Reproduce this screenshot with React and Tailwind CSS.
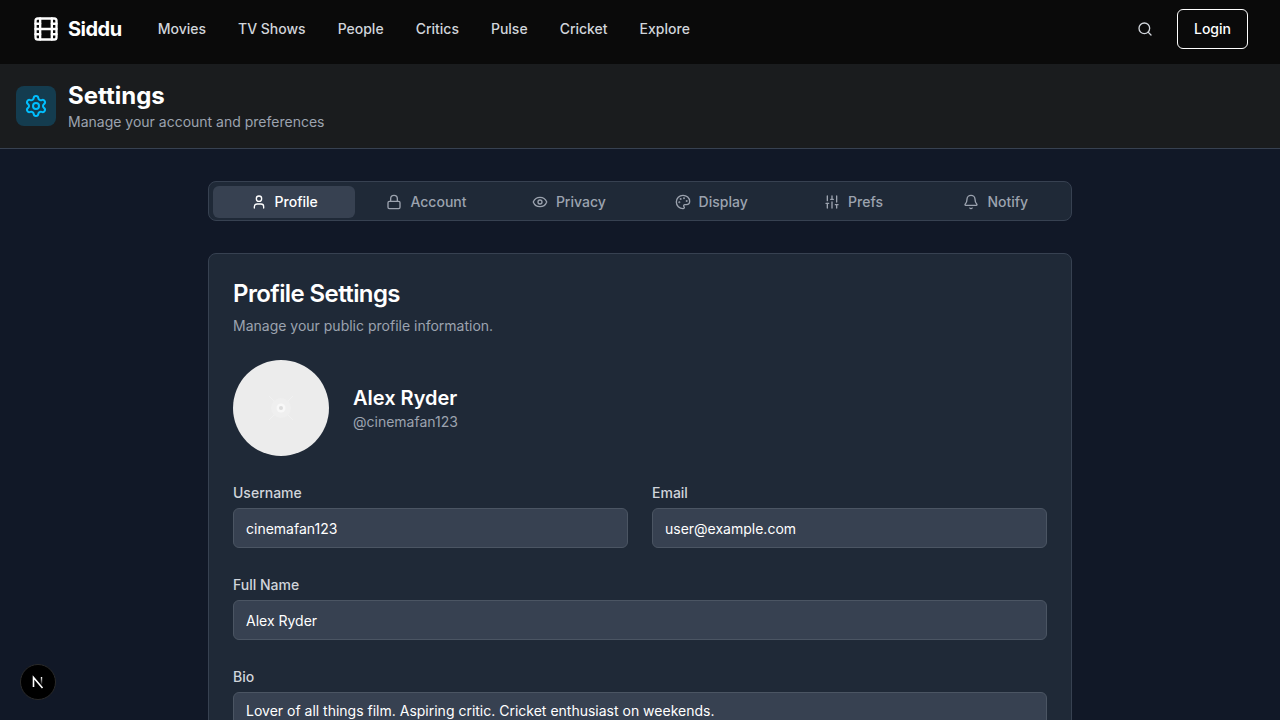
import React from 'react';
import { Film, Settings, Search, User, Lock, Eye, Palette, SlidersVertical, Bell } from 'lucide-react';

const navLinks = ['Movies', 'TV Shows', 'People', 'Critics', 'Pulse', 'Cricket', 'Explore'];

const tabs = [
  { label: 'Profile', icon: User, active: true },
  { label: 'Account', icon: Lock },
  { label: 'Privacy', icon: Eye },
  { label: 'Display', icon: Palette },
  { label: 'Prefs', icon: SlidersVertical },
  { label: 'Notify', icon: Bell },
];

const Field = ({ label, value }) => (
  <div className="flex flex-col gap-[5px]">
    <label className="text-sm font-medium leading-[20px] text-[#d1d5db]">{label}</label>
    <input
      readOnly
      value={value}
      className="h-10 w-full rounded-md border border-[#4b5563] bg-[#374151] px-3 text-sm text-white outline-none"
    />
  </div>
);

const App = () => {
  return (
    <div className="relative h-screen overflow-hidden bg-[#111827] font-['Inter',sans-serif] text-white">
      <header className="flex h-16 items-center justify-between bg-[#0a0a0a] px-8 pb-[6px]">
        <div className="flex items-center">
          <div className="flex items-center gap-2">
            <Film size={28} strokeWidth={2} className="text-white" />
            <span className="text-xl font-bold tracking-tight">Siddu</span>
          </div>
          <nav className="ml-9 flex items-center gap-8">
            {navLinks.map((link) => (
              <a key={link} href="#" className="text-sm font-medium text-[#d1d5db]">{link}</a>
            ))}
          </nav>
        </div>
        <div className="flex items-center gap-6">
          <Search size={16} className="text-[#d1d5db]" />
          <button className="h-10 rounded-md border border-white px-4 text-sm font-medium text-white">Login</button>
        </div>
      </header>

      <div className="flex h-[85px] items-center gap-3 border-b border-[#374151] bg-[#1a1c1e] px-4">
        <div className="flex h-10 w-10 items-center justify-center rounded-lg bg-[#143c4f]">
          <Settings size={24} className="text-[#00bfff]" />
        </div>
        <div>
          <h1 className="text-2xl font-bold leading-8">Settings</h1>
          <p className="text-sm text-[#9ca3af]">Manage your account and preferences</p>
        </div>
      </div>

      <main className="mx-auto w-[864px] pt-8">
        <div className="grid h-10 grid-cols-6 rounded-lg border border-[#374151] bg-[#1f2937] p-1">
          {tabs.map(({ label, icon: Icon, active }) => (
            <button
              key={label}
              className={
                active
                  ? 'flex h-8 items-center justify-center gap-2 rounded-md bg-[#374151] text-sm font-medium text-white'
                  : 'flex h-8 items-center justify-center gap-2 rounded-md text-sm font-medium text-[#9ca3af]'
              }
            >
              <Icon size={16} />
              {label}
            </button>
          ))}
        </div>

        <section className="mt-8 rounded-lg border border-[#374151] bg-[#1f2937] p-6">
          <h2 className="text-2xl font-semibold leading-8 tracking-tight">Profile Settings</h2>
          <p className="mt-[6px] text-sm text-[#9ca3af]">Manage your public profile information.</p>

          <div className="mt-6 flex items-center gap-6">
            <div className="flex h-24 w-24 items-center justify-center rounded-full bg-[#ececec]">
              <svg width="32" height="32" viewBox="0 0 32 32">
                <g stroke="#f1f1f1" strokeWidth="1">
                  <path d="M4 4l24 24M28 4L4 28" />
                </g>
                <circle cx="16" cy="16" r="10" fill="#efefef" />
                <circle cx="16" cy="16" r="4.5" fill="#f8f8f8" />
                <circle cx="16" cy="16" r="2" fill="#dcdcdc" />
              </svg>
            </div>
            <div>
              <div className="text-xl font-semibold leading-7">Alex Ryder</div>
              <div className="text-sm text-[#9ca3af]">@cinemafan123</div>
            </div>
          </div>

          <div className="mt-[27px] grid grid-cols-2 gap-6">
            <Field label="Username" value="cinemafan123" />
            <Field label="Email" value="user@example.com" />
          </div>
          <div className="mt-[27px]">
            <Field label="Full Name" value="Alex Ryder" />
          </div>
          <div className="mt-[27px] flex flex-col gap-[5px]">
            <label className="text-sm font-medium leading-[20px] text-[#d1d5db]">Bio</label>
            <textarea
              readOnly
              rows={3}
              value="Lover of all things film. Aspiring critic. Cricket enthusiast on weekends."
              className="w-full rounded-md border border-[#4b5563] bg-[#374151] px-3 py-2 text-sm text-white outline-none"
            />
          </div>
        </section>
      </main>

      <div className="absolute bottom-5 left-5 flex h-9 w-9 items-center justify-center rounded-full border border-[#2a2a2a] bg-black">
        <svg width="16" height="16" viewBox="0 0 16 16" fill="none">
          <defs>
            <linearGradient id="nextBar" x1="0" y1="0" x2="0" y2="1">
              <stop offset="0" stopColor="#fff" />
              <stop offset="1" stopColor="#fff" stopOpacity="0" />
            </linearGradient>
          </defs>
          <path d="M3.5 13V3.5L12.5 14" stroke="#fff" strokeWidth="1.6" />
          <rect x="10.8" y="3" width="1.4" height="8" fill="url(#nextBar)" />
        </svg>
      </div>
    </div>
  );
};

export default App;
